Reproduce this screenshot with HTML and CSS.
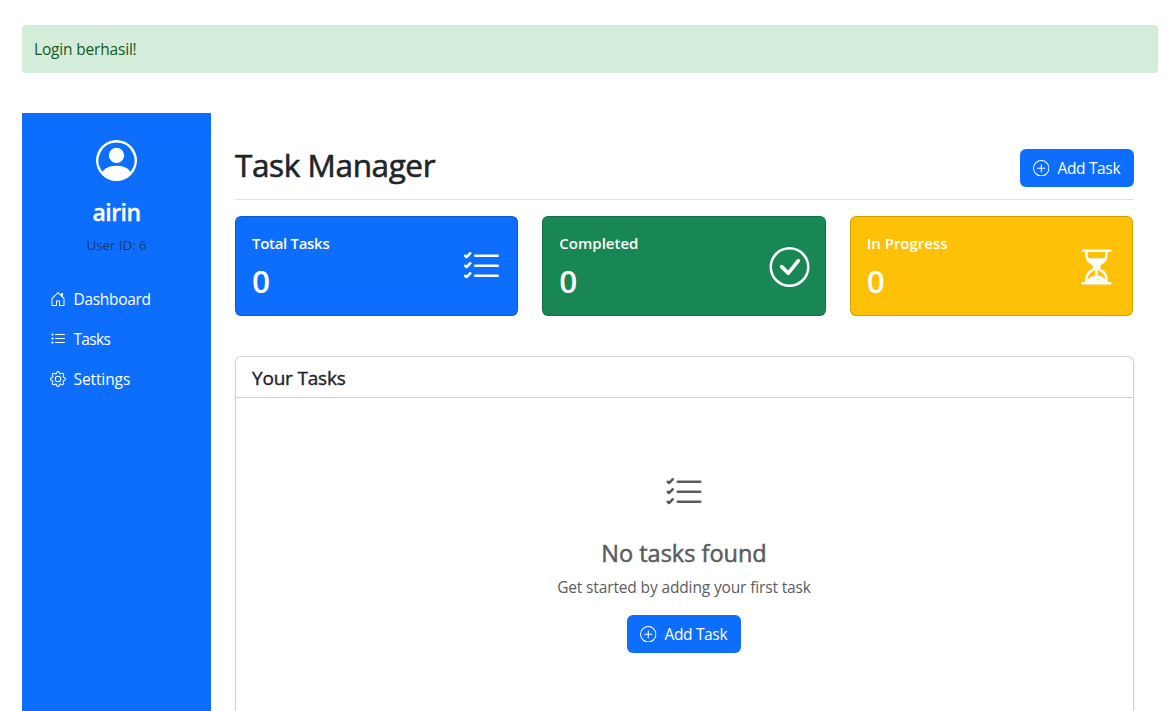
FILE: index.html
```html
<!DOCTYPE html>
<html lang="id">
<head>
<meta charset="utf-8">
<title>Task Manager</title>
<link rel="stylesheet" href="styles.css">
</head>
<body>
<svg class="sprite" aria-hidden="true">
  <symbol id="person" viewBox="0 0 16 16"><path d="M11 6a3 3 0 1 1-6 0 3 3 0 0 1 6 0"/><path fill-rule="evenodd" d="M0 8a8 8 0 1 1 16 0A8 8 0 0 1 0 8m8-7a7 7 0 0 0-5.468 11.37C3.242 11.226 4.805 10 8 10s4.757 1.225 5.468 2.37A7 7 0 0 0 8 1"/></symbol>
  <symbol id="house" viewBox="0 0 16 16"><path fill-rule="evenodd" d="M8.354 1.146a.5.5 0 0 0-.708 0l-6 6A.5.5 0 0 0 1.5 7.5v7a.5.5 0 0 0 .5.5h4.5a.5.5 0 0 0 .5-.5v-4h2v4a.5.5 0 0 0 .5.5H14a.5.5 0 0 0 .5-.5v-7a.5.5 0 0 0-.146-.354L13 5.793V2.5a.5.5 0 0 0-.5-.5h-1a.5.5 0 0 0-.5.5v1.293zM2.5 14V7.707l5.5-5.5 5.5 5.5V14H10v-4a.5.5 0 0 0-.5-.5h-3a.5.5 0 0 0-.5.5v4z"/></symbol>
  <symbol id="list" viewBox="0 0 16 16"><path d="M5.5 3h9a.5.5 0 0 1 0 1h-9a.5.5 0 0 1 0-1m0 4h9a.5.5 0 0 1 0 1h-9a.5.5 0 0 1 0-1m0 4h9a.5.5 0 0 1 0 1h-9a.5.5 0 0 1 0-1"/><path d="M2 2.5h1a.5.5 0 0 1 .5.5v1a.5.5 0 0 1-.5.5H2a.5.5 0 0 1-.5-.5V3a.5.5 0 0 1 .5-.5M1.5 7a.5.5 0 0 1 .5-.5h1a.5.5 0 0 1 .5.5v1a.5.5 0 0 1-.5.5H2a.5.5 0 0 1-.5-.5zM2 10.500a.5.5 0 0 0-.5.5v1a.5.5 0 0 0 .5.5h1a.5.5 0 0 0 .5-.5v-1a.5.5 0 0 0-.5-.5z"/></symbol>
  <symbol id="gear" viewBox="0 0 16 16"><path d="M8 4.754a3.246 3.246 0 1 0 0 6.492 3.246 3.246 0 0 0 0-6.492M5.754 8a2.246 2.246 0 1 1 4.492 0 2.246 2.246 0 0 1-4.492 0"/><path d="M9.796 1.343c-.527-1.79-3.065-1.79-3.592 0l-.094.319a.873.873 0 0 1-1.255.52l-.292-.16c-1.64-.892-3.433.902-2.54 2.541l.159.292a.873.873 0 0 1-.52 1.255l-.319.094c-1.79.527-1.79 3.065 0 3.592l.319.094a.873.873 0 0 1 .52 1.255l-.16.292c-.892 1.64.901 3.434 2.541 2.54l.292-.159a.873.873 0 0 1 1.255.52l.094.319c.527 1.79 3.065 1.79 3.592 0l.094-.319a.873.873 0 0 1 1.255-.52l.292.16c1.64.893 3.434-.902 2.54-2.541l-.159-.292a.873.873 0 0 1 .52-1.255l.319-.094c1.79-.527 1.79-3.065 0-3.592l-.319-.094a.873.873 0 0 1-.52-1.255l.16-.292c.893-1.64-.902-3.433-2.541-2.54l-.292.159a.873.873 0 0 1-1.255-.52zm-2.633.283c.246-.835 1.428-.835 1.674 0l.094.319a1.873 1.873 0 0 0 2.693 1.115l.291-.16c.764-.415 1.6.42 1.184 1.185l-.159.292a1.873 1.873 0 0 0 1.116 2.692l.318.094c.835.246.835 1.428 0 1.674l-.319.094a1.873 1.873 0 0 0-1.115 2.693l.16.291c.415.764-.42 1.6-1.185 1.184l-.291-.159a1.873 1.873 0 0 0-2.693 1.116l-.094.318c-.246.835-1.428.835-1.674 0l-.094-.319a1.873 1.873 0 0 0-2.692-1.115l-.292.16c-.764.415-1.6-.42-1.184-1.185l.159-.291A1.873 1.873 0 0 0 1.945 8.93l-.319-.094c-.835-.246-.835-1.428 0-1.674l.319-.094A1.873 1.873 0 0 0 3.06 4.377l-.16-.292c-.415-.764.42-1.6 1.185-1.184l.292.159a1.873 1.873 0 0 0 2.692-1.115z"/></symbol>
  <symbol id="plus" viewBox="0 0 16 16"><path fill-rule="evenodd" d="M8 15A7 7 0 1 0 8 1a7 7 0 0 0 0 14m0 1A8 8 0 1 0 8 0a8 8 0 0 0 0 16"/><path d="M8 4a.5.5 0 0 1 .5.5v3h3a.5.5 0 0 1 0 1h-3v3a.5.5 0 0 1-1 0v-3h-3a.5.5 0 0 1 0-1h3v-3A.5.5 0 0 1 8 4"/></symbol>
  <symbol id="checklist" viewBox="0 0 16 16"><path fill-rule="evenodd" d="M5 11.5a.5.5 0 0 1 .5-.5h9a.5.5 0 0 1 0 1h-9a.5.5 0 0 1-.5-.5m0-4a.5.5 0 0 1 .5-.5h9a.5.5 0 0 1 0 1h-9a.5.5 0 0 1-.5-.5m0-4a.5.5 0 0 1 .5-.5h9a.5.5 0 0 1 0 1h-9a.5.5 0 0 1-.5-.5M3.854 2.146a.5.5 0 0 1 0 .708l-1.5 1.5a.5.5 0 0 1-.708 0l-.5-.5a.5.5 0 1 1 .708-.708L2 3.293l1.146-1.147a.5.5 0 0 1 .708 0m0 4a.5.5 0 0 1 0 .708l-1.5 1.5a.5.5 0 0 1-.708 0l-.5-.5a.5.5 0 1 1 .708-.708L2 7.293l1.146-1.147a.5.5 0 0 1 .708 0m0 4a.5.5 0 0 1 0 .708l-1.5 1.5a.5.5 0 0 1-.708 0l-.5-.5a.5.5 0 0 1 .708-.708l.146.147 1.146-1.147a.5.5 0 0 1 .708 0"/></symbol>
  <symbol id="check" viewBox="0 0 16 16"><path fill-rule="evenodd" d="M8 15A7 7 0 1 0 8 1a7 7 0 0 0 0 14m0 1A8 8 0 1 0 8 0a8 8 0 0 0 0 16"/><path d="m10.97 4.97-.02.022-3.473 4.425-2.093-2.094a.75.75 0 0 0-1.06 1.06L6.97 11.03a.75.75 0 0 0 1.079-.02l3.992-4.99a.75.75 0 0 0-1.071-1.05"/></symbol>
  <symbol id="hourglass" viewBox="0 0 16 16"><path d="M2.5 15a.5.5 0 1 1 0-1h1v-1a4.5 4.5 0 0 1 2.557-4.06c.29-.139.443-.377.443-.59v-.7c0-.213-.154-.451-.443-.59A4.5 4.5 0 0 1 3.5 3V2h-1a.5.5 0 0 1 0-1h11a.5.5 0 0 1 0 1h-1v1a4.5 4.5 0 0 1-2.557 4.06c-.29.139-.443.377-.443.59v.7c0 .213.154.451.443.59A4.5 4.5 0 0 1 12.5 13v1h1a.5.5 0 0 1 0 1zm2-13v1c0 .537.12 1.045.337 1.5h6.326c.216-.455.337-.963.337-1.5V2zm3 6.35c0 .701-.478 1.236-1.011 1.492A3.5 3.5 0 0 0 4.5 13s.866-1.299 3-1.48zm1 0v3.17c2.134.181 3 1.48 3 1.48a3.5 3.5 0 0 0-1.989-3.158C8.978 9.586 8.5 9.052 8.5 8.351z"/></symbol>
</svg>
<div class="alert">Login berhasil!</div>
<div class="layout">
  <nav class="sidebar">
    <svg class="avatar"><use href="#person"/></svg>
    <h4 class="username">airin</h4>
    <small class="user-id">User ID: 6</small>
    <ul class="menu">
      <li><a class="menu-link wide"><svg class="icon"><use href="#house"/></svg><span>Dashboard</span></a></li>
      <li><a class="menu-link tight"><svg class="icon"><use href="#list"/></svg><span>Tasks</span></a></li>
      <li><a class="menu-link"><svg class="icon"><use href="#gear"/></svg><span>Settings</span></a></li>
    </ul>
  </nav>
  <main class="content">
    <header class="page-head">
      <h1 class="title">Task Manager</h1>
      <button class="btn"><svg class="btn-icon"><use href="#plus"/></svg><span>Add Task</span></button>
    </header>
    <section class="stats">
      <div class="stat total"><div><h6 class="stat-name">Total Tasks</h6><div class="stat-value">0</div></div><svg class="stat-icon"><use href="#checklist"/></svg></div>
      <div class="stat done"><div><h6 class="stat-name">Completed</h6><div class="stat-value">0</div></div><svg class="stat-icon"><use href="#check"/></svg></div>
      <div class="stat progress"><div><h6 class="stat-name">In Progress</h6><div class="stat-value">0</div></div><svg class="stat-icon"><use href="#hourglass"/></svg></div>
    </section>
    <section class="panel">
      <h5 class="panel-head">Your Tasks</h5>
      <div class="empty">
        <svg class="empty-icon"><use href="#checklist"/></svg>
        <h4 class="empty-title">No tasks found</h4>
        <p class="empty-text">Get started by adding your first task</p>
        <button class="btn"><svg class="btn-icon"><use href="#plus"/></svg><span>Add Task</span></button>
      </div>
    </section>
  </main>
</div>
</body>
</html>
```
FILE: styles.css
```css
* { box-sizing: border-box; }
html, body { height: 100%; }
body {
  margin: 0;
  padding: 25px 10px 0 22px;
  display: flex;
  flex-direction: column;
  background: #fff;
  color: #212529;
  font: 400 16px/24px "Open Sans", "Noto Sans", sans-serif;
}
h1, h4, h5, h6, p, ul { margin: 0; padding: 0; }
svg { display: block; fill: currentColor; flex: none; }
.sprite { display: none; }
.alert {
  flex: none;
  height: 48px;
  padding: 12px;
  margin-bottom: 40px;
  border-radius: 4px;
  background: #d4edda;
  color: #155724;
  font-size: 15.5px;
  letter-spacing: -0.18px;
}
.layout { flex: 1; min-height: 0; display: flex; }
.sidebar {
  width: 189px;
  background: #0d6efd;
  color: #fff;
  display: flex;
  flex-direction: column;
  align-items: center;
  padding-top: 27px;
}
.avatar { width: 41px; height: 41px; }
.username { margin-top: 17px; font-size: 23px; line-height: 29px; font-weight: 600; letter-spacing: -0.5px; -webkit-text-stroke: 0.3px; }
.user-id { margin-top: 8px; font-size: 13.5px; line-height: 21px; color: rgba(33, 37, 41, 0.75); letter-spacing: -0.1px; }
.menu { align-self: stretch; margin-top: 23px; list-style: none; padding: 0 12px; }
.menu-link { display: flex; align-items: center; gap: 8px; height: 40px; padding-left: 15.5px; font-size: 15.5px; letter-spacing: -0.1px; }
.wide { letter-spacing: -0.3px; }
.tight { letter-spacing: -0.7px; }
.icon { width: 16px; height: 16px; }
.content { flex: 1; display: flex; flex-direction: column; padding: 36px 24px 0; }
.page-head { flex: none; display: flex; align-items: flex-start; justify-content: space-between; height: 51px; border-bottom: 1px solid #dee2e6; }
.title { font-size: 31.5px; line-height: 31px; font-weight: 400; letter-spacing: -0.4px; -webkit-text-stroke: 0.6px; }
.btn {
  flex: none;
  display: flex;
  align-items: center;
  gap: 8px;
  width: 114px;
  height: 38px;
  padding: 0 12px 0 13px;
  border: 0;
  border-radius: 6px;
  background: #0d6efd;
  color: #fff;
  font: inherit;
  font-size: 15.5px;
  letter-spacing: -0.35px;
  white-space: nowrap;
}
.btn-icon { width: 16.5px; height: 16.5px; }
.stats { flex: none; display: grid; grid-template-columns: repeat(3, 1fr); gap: 24px; margin: 16px 1px 0 0; }
.stat {
  display: flex;
  justify-content: space-between;
  align-items: center;
  height: 100px;
  padding: 0 15px 0 16px;
  border: 1px solid rgba(0, 0, 0, 0.175);
  border-radius: 6px;
  color: #fff;
}
.total { background-color: #0d6efd; }
.done { background-color: #198754; }
.progress { background-color: #ffc107; }
.stat-name { font-size: 15px; line-height: 19px; font-weight: 600; letter-spacing: -0.2px; }
.total .stat-name { letter-spacing: -0.3px; }
.done .stat-name, .progress .stat-name { letter-spacing: 0; }
.stat-value { margin: 9px 0 -1px; font-size: 31.5px; line-height: 38px; font-weight: 600; }
.stat-icon { width: 41px; height: 40px; margin-top: 2px; }
.panel {
  flex: 1;
  min-height: 0;
  margin-top: 40px;
  border: 1px solid #d0d1d2;
  border-bottom: 0;
  border-radius: 6px 6px 0 0;
  box-shadow: 0 2px 4px rgba(0, 0, 0, 0.075);
}
.panel-head { height: 41px; padding: 9px 16px 0; border-bottom: 1px solid #d0d1d2; font-size: 19px; line-height: 24px; font-weight: 400; letter-spacing: -0.2px; -webkit-text-stroke: 0.4px; }
.empty { display: flex; flex-direction: column; align-items: center; padding: 75px 1px 0 0; color: #595c5f; }
.empty-icon { width: 40px; height: 40px; }
.empty-title { margin-top: 26px; font-size: 23.5px; line-height: 29px; font-weight: 400; -webkit-text-stroke: 0.5px; }
.empty-text { margin: 7px 0 16px; font-size: 15.5px; letter-spacing: -0.14px; }
```
